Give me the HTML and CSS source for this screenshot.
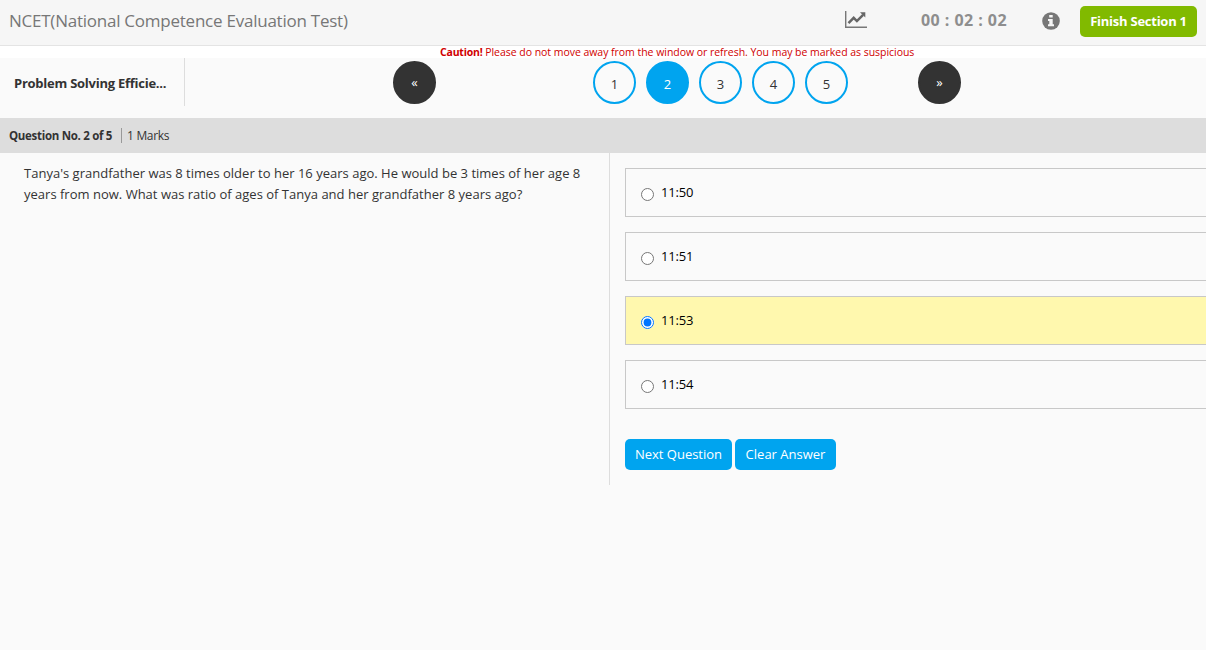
FILE: index.html
```html
<!DOCTYPE html>
<html lang="en">
<head>
<meta charset="utf-8">
<title>NCET(National Competence Evaluation Test)</title>
<link rel="stylesheet" href="styles.css">
</head>
<body>
<header class="topbar">
  <h1 class="title">NCET(National Competence Evaluation Test)</h1>
  <svg class="chart-icon" viewBox="0 0 22 17" width="22" height="17"><path d="M.7 0v16.2H22" fill="none" stroke="#777" stroke-width="1.4"/><path d="M3.5 12.2l5.2-5.3 3.2 3.2 6.2-6.3" fill="none" stroke="#666" stroke-width="2.5"/><path d="M15 1.3h5.3v5.3z" fill="#666"/></svg>
  <span class="timer">00 : 02 : 02</span>
  <svg class="info-icon" viewBox="0 0 18 18" width="18" height="18"><circle cx="9" cy="9" r="8.8" fill="#777"/><path d="M7.2 3h3.5v2.6H7.2zM6 7h4.7v5.2H12v2H6v-2h1.3V9H6z" fill="#f6f6f6"/></svg>
  <button class="finish">Finish Section 1</button>
</header>
<p class="caution"><b>Caution!</b> Please do not move away from the window or refresh. You may be marked as suspicious</p>
<nav class="pager">
  <div class="section">Problem Solving Efficie...</div>
  <a class="dot arrow prev">«</a>
  <div class="numbers">
    <a class="dot">1</a><a class="dot current">2</a><a class="dot">3</a><a class="dot">4</a><a class="dot">5</a>
  </div>
  <a class="dot arrow next">»</a>
</nav>
<div class="info"><b class="count">Question No. 2 of 5</b><span class="marks">1 Marks</span></div>
<main class="content">
  <section class="question">Tanya's grandfather was 8 times older to her 16 years ago. He would be 3 times of her age 8<br>years from now. What was ratio of ages of Tanya and her grandfather 8 years ago?</section>
  <section class="answers">
    <label class="option"><input type="radio" name="a"><span>11:50</span></label>
    <label class="option"><input type="radio" name="a"><span>11:51</span></label>
    <label class="option chosen"><input type="radio" name="a" checked><span>11:53</span></label>
    <label class="option"><input type="radio" name="a"><span>11:54</span></label>
    <div class="actions"><button>Next Question</button><button>Clear Answer</button></div>
  </section>
</main>
</body>
</html>
```
FILE: styles.css
```css
* { box-sizing: border-box; }
body { margin: 0; height: 650px; overflow: hidden; background: #fafafa; color: #333; font: 13px/21px "Open Sans", sans-serif; }
.topbar { display: flex; height: 46px; background: #f6f6f6; border-bottom: 1px solid #e4e4e4; color: #777; }
.title { width: 835px; margin: 0; padding-left: 9px; font-size: 17px; font-weight: 400; line-height: 42px; letter-spacing: -0.24px; white-space: nowrap; }
.chart-icon { margin: 11px 0 0 10px; }
.timer { width: 121px; margin-left: 54px; font-size: 16px; font-weight: 700; line-height: 40px; letter-spacing: 0.45px; color: #8e8e8e; white-space: nowrap; }
.info-icon { margin-top: 12px; }
button { font: 13px/21px "Open Sans", sans-serif; border: 0; border-radius: 5px; color: #fff; height: 31px; padding: 0; white-space: nowrap; }
.finish { width: 117px; margin: 6px 0 0 20px; background: #81ba00; font-weight: 700; letter-spacing: -0.25px; }
.caution { height: 12px; margin: 0; padding-left: 440px; background: #fff; color: #d00000; font-size: 10.5px; line-height: 12px; letter-spacing: -0.035px; white-space: nowrap; }
.caution b { letter-spacing: -0.2px; }
.pager { display: flex; height: 60px; }
.section { width: 185px; height: 48px; padding-left: 14px; border-right: 1px solid #ddd; font-weight: 700; line-height: 50px; letter-spacing: -0.25px; white-space: nowrap; }
.dot { display: block; width: 43px; height: 43px; margin-top: 3px; border: 2px solid #00a4ef; border-radius: 50%; text-align: center; line-height: 43px; }
.current { background: #00a4ef; color: #fff; }
.arrow { border-color: #333; background: #333; color: #fff; line-height: 39px; }
.prev { margin-left: 208px; }
.numbers { display: flex; gap: 10px; margin-left: 157px; }
.next { margin-left: 70px; }
.info { display: flex; align-items: center; height: 35px; padding-left: 9px; background: #ddd; font-size: 12px; white-space: nowrap; }
.count { width: 112px; font-size: 11.5px; font-weight: 700; letter-spacing: -0.3px; }
.marks { padding-left: 5px; border-left: 1px solid #999; line-height: 15px; letter-spacing: -0.3px; }
.content { display: flex; height: 332px; }
.question { width: 610px; padding: 10px 0 0 24px; border-right: 1px solid #ddd; letter-spacing: 0.008px; white-space: nowrap; }
.answers { flex: 1; padding: 15px 0 0 15px; color: #000; }
.option { display: flex; height: 49px; margin-bottom: 15px; padding-left: 15px; border: 1px solid #c8c8c8; border-right: 0; line-height: 47px; letter-spacing: -0.2px; }
.option input { width: 13px; height: 13px; margin: 19px 7px 0 0; }
.chosen { background: #fff8ae; }
.actions { display: flex; gap: 3px; padding-top: 15px; }
.actions button { width: 107px; background: #00a4ef; }
.actions button + button { width: 101px; }
```
